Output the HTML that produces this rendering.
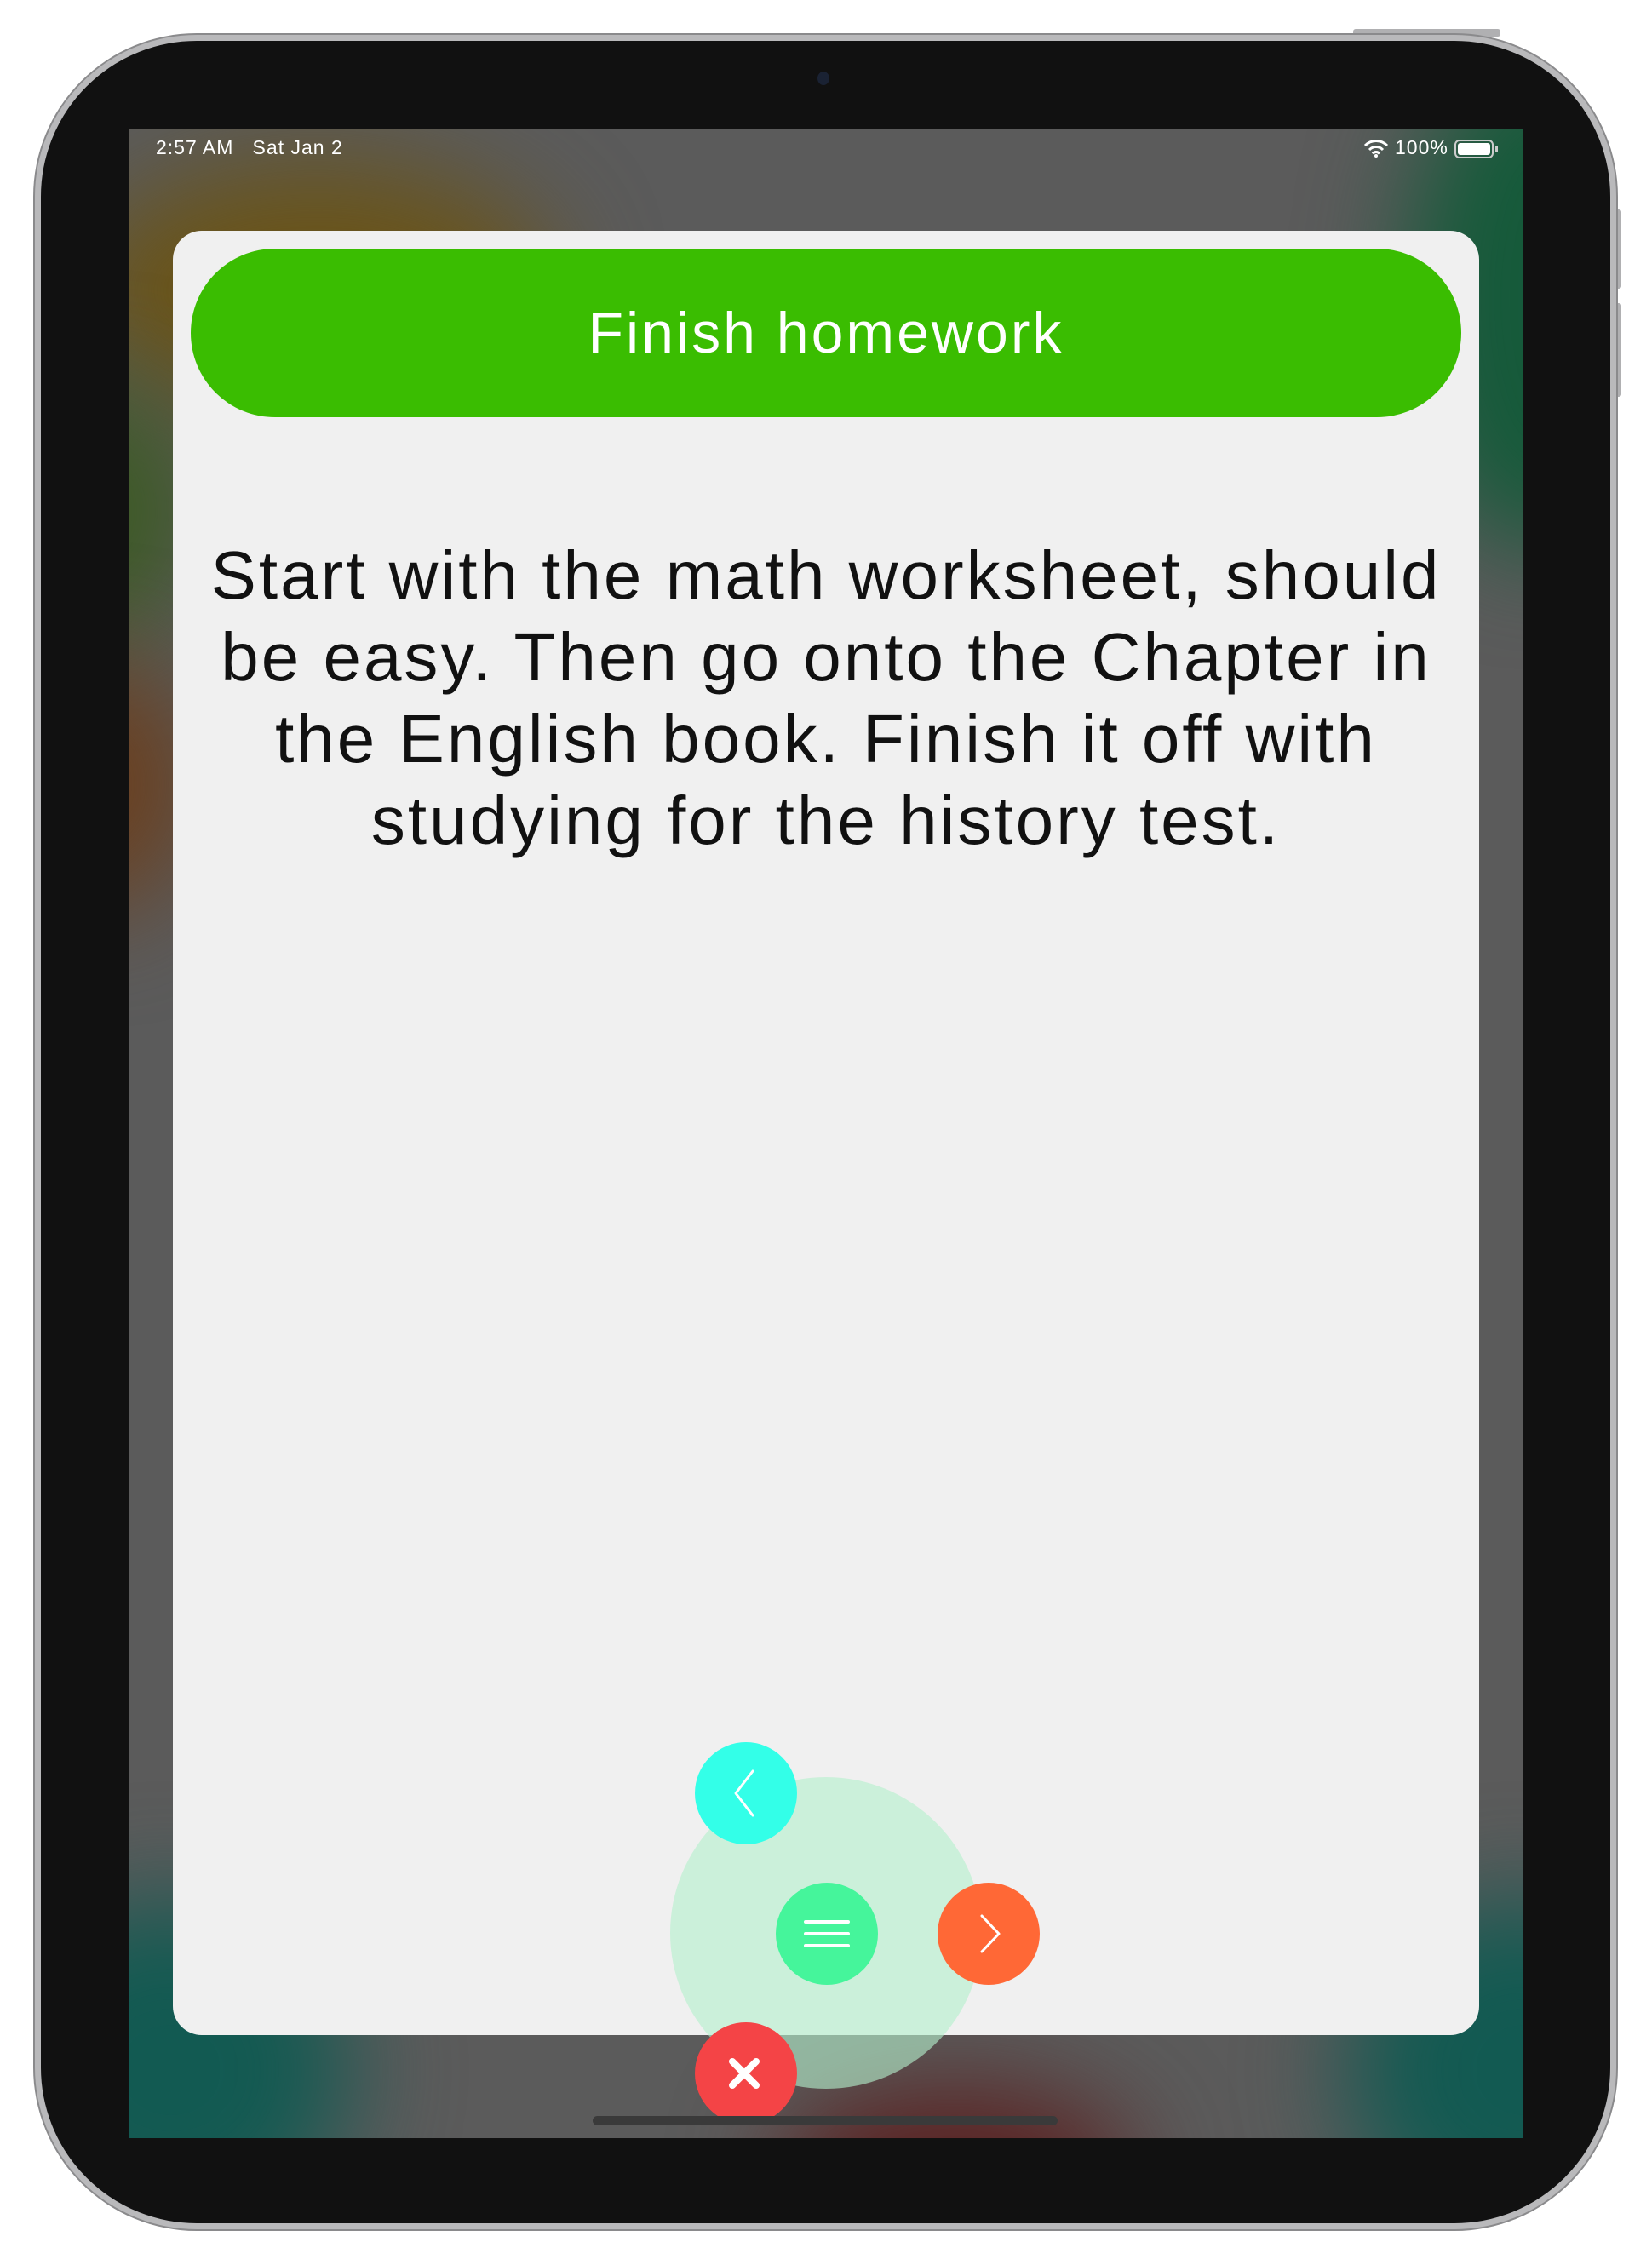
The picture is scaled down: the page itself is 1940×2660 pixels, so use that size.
<!DOCTYPE html>
<html><head><meta charset="utf-8"><style>
*{margin:0;padding:0;box-sizing:border-box}
html,body{width:1940px;height:2660px;background:#fff;overflow:hidden;font-family:"Liberation Sans",sans-serif}
.dev{position:absolute;left:41px;top:41px;width:1857px;height:2577px;border-radius:190px;background:#111;border:7px solid #b9b9bb;box-shadow:0 0 0 2px #8a8a8c}
.btn{position:absolute;background:#b0b0b2;border-radius:3px}
.screen{position:absolute;left:151px;top:151px;width:1638px;height:2360px;background:#5b5b5b;overflow:hidden}
.blob{position:absolute;border-radius:50%;filter:blur(60px)}
.card{position:absolute;left:203px;top:271px;width:1534px;height:2119px;border-radius:34px;background:#f0f0f0}
.pill{position:absolute;left:224px;top:292px;width:1492px;height:198px;border-radius:99px;background:#3abd01;color:#fff;font-size:68px;text-align:center;line-height:198px;letter-spacing:3px}
.body{position:absolute;left:203px;top:628px;width:1534px;text-align:center;font-size:80px;line-height:96px;color:#111;letter-spacing:3px}
.c{position:absolute;border-radius:50%}
</style></head><body>
<div class="btn" style="left:1589px;top:34px;width:173px;height:9px"></div>
<div class="btn" style="left:1896px;top:246px;width:8px;height:93px"></div>
<div class="btn" style="left:1896px;top:356px;width:8px;height:110px"></div>
<div class="dev"></div>
<div class="c" style="left:960px;top:84px;width:14px;height:16px;background:#1a2233"></div>
<div class="screen">
  <div class="blob" style="left:-60px;top:40px;width:560px;height:300px;background:#6a5418"></div>
  <div class="blob" style="left:-160px;top:300px;width:240px;height:300px;background:#3d5a25"></div>
  <div class="blob" style="left:-160px;top:620px;width:240px;height:300px;background:#6a4020"></div>
  <div class="blob" style="left:1500px;top:-100px;width:320px;height:600px;background:#155a3a"></div>
  <div class="blob" style="left:-160px;top:2080px;width:420px;height:400px;background:#125a52"></div>
  <div class="blob" style="left:1430px;top:2080px;width:420px;height:400px;background:#125a52"></div>
  <div class="blob" style="left:760px;top:2300px;width:420px;height:200px;background:#5a2020"></div>
  <div style="position:absolute;left:32px;top:9px;color:#fff;font-size:23px;letter-spacing:1px">2:57 AM&nbsp;&nbsp;&nbsp;Sat Jan 2</div>
  <div style="position:absolute;left:1487px;top:9px;color:#fff;font-size:23px;letter-spacing:1px">100%</div>
  <svg style="position:absolute;left:1450px;top:12px" width="30" height="22" viewBox="0 0 30 22"><path d="M2 8a18 18 0 0 1 26 0M7 13a11 11 0 0 1 16 0M11 17.5a5 5 0 0 1 8 0" stroke="#fff" stroke-width="3" fill="none"/><circle cx="15" cy="20" r="2" fill="#fff"/></svg>
  <div style="position:absolute;left:1557px;top:13px;width:46px;height:22px;border:2px solid #ccc;border-radius:6px;padding:2px"><div style="width:100%;height:100%;background:#fff;border-radius:3px"></div></div>
  <div style="position:absolute;left:1605px;top:20px;width:3px;height:8px;background:#ccc;border-radius:2px"></div>
  <div style="position:absolute;left:545px;top:2334px;width:546px;height:11px;border-radius:6px;background:#3a3a3a"></div>
</div>
<div class="card"></div>
<div class="pill">Finish homework</div>
<div class="body">Start with the math worksheet, should<br>be easy. Then go onto the Chapter in<br>the English book. Finish it off with<br>studying for the history test.</div>
<div class="c" style="left:787px;top:2087px;width:366px;height:366px;background:rgba(180,240,205,0.62)"></div>
<div class="c" style="left:816px;top:2046px;width:120px;height:120px;background:#33ffe8"></div>
<svg style="position:absolute;left:816px;top:2046px" width="120" height="120"><path d="M68 34L48 60L68 86" stroke="#fff" stroke-width="3" fill="none" stroke-linecap="round" stroke-linejoin="round"/></svg>
<div class="c" style="left:911px;top:2211px;width:120px;height:120px;background:#45f59b"></div>
<svg style="position:absolute;left:911px;top:2211px" width="120" height="120"><path d="M35 46H85M35 60H85M35 74H85" stroke="#fff" stroke-width="4" stroke-linecap="round"/></svg>
<div class="c" style="left:1101px;top:2211px;width:120px;height:120px;background:#ff6836"></div>
<svg style="position:absolute;left:1101px;top:2211px" width="120" height="120"><path d="M52 39L72 60L52 81" stroke="#fff" stroke-width="3" fill="none" stroke-linecap="round" stroke-linejoin="round"/></svg>
<div style="position:absolute;left:816px;top:2375px;width:120px;height:110px;overflow:hidden">
<div class="c" style="left:0;top:0;width:120px;height:120px;background:#f44446"></div>
<svg style="position:absolute;left:0;top:0" width="120" height="120"><path d="M44 46L72 74M72 46L44 74" stroke="#fff" stroke-width="8" stroke-linecap="round"/></svg>
</div>
</body></html>
